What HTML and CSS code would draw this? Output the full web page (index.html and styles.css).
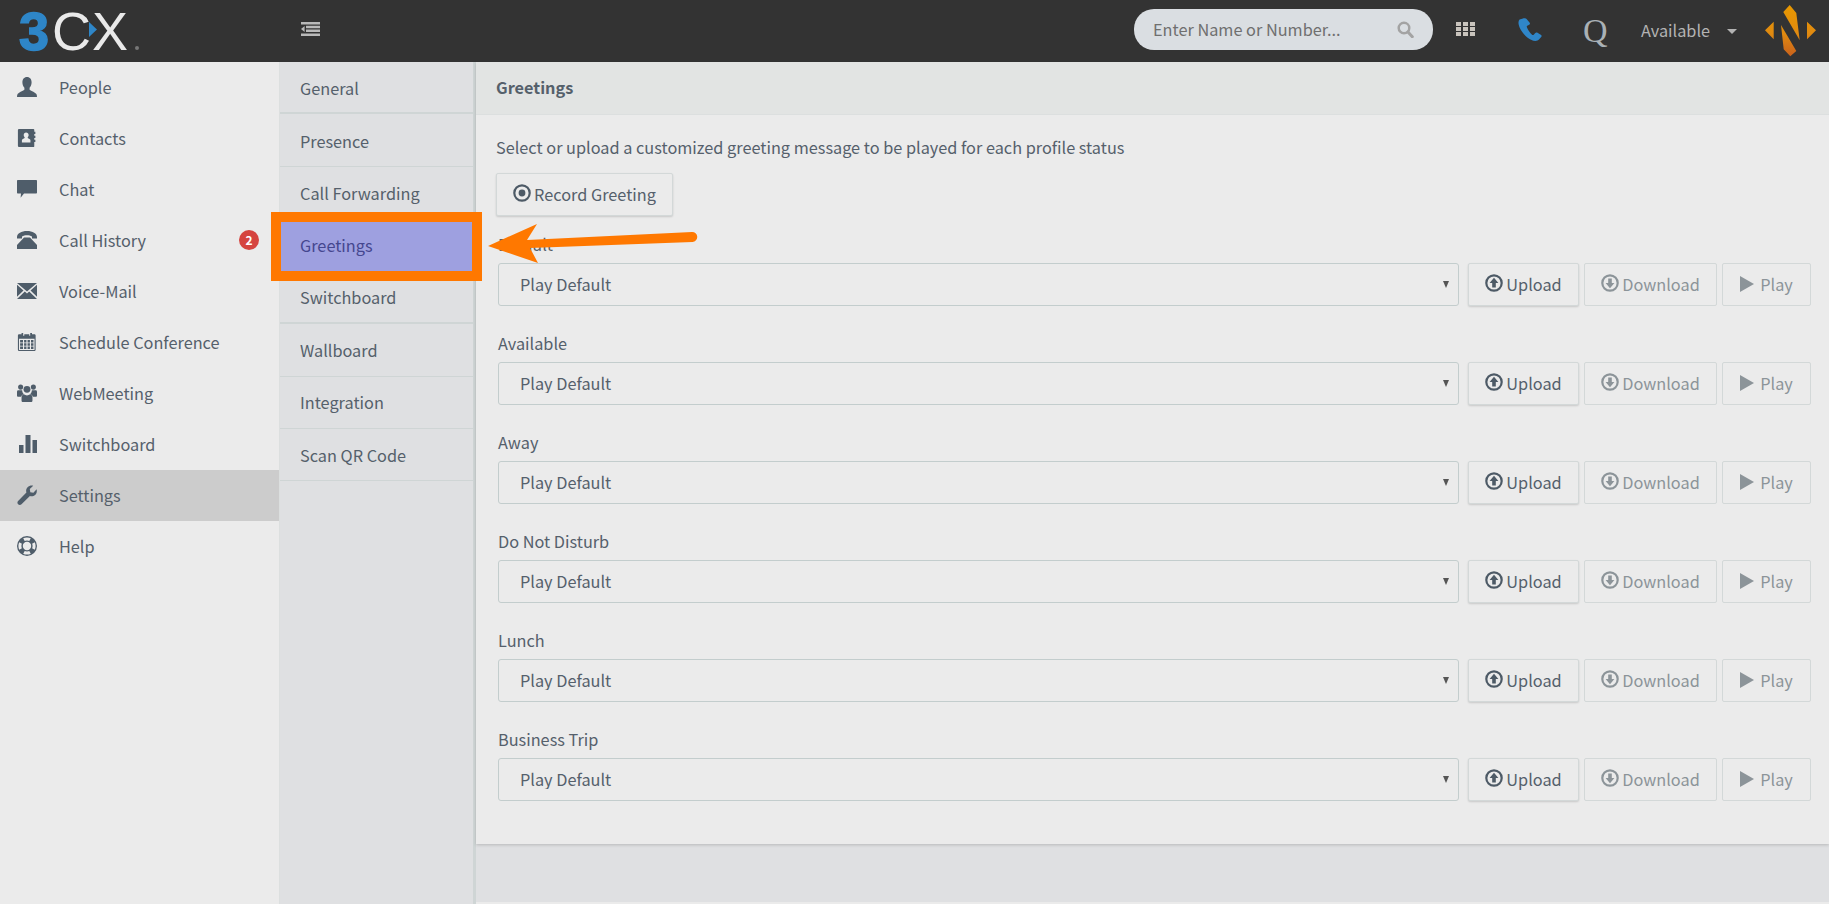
FILE: index.html
```html
<!DOCTYPE html>
<html lang="en">
  <head>
    <meta charset="UTF-8" />
    <meta name="viewport" content="width=device-width, initial-scale=1.0" />
    <title>Greetings</title>
    <link rel="stylesheet" href="styles.css">
  </head>
  <body>
    <header class="topbar">
      <svg class="logo" viewBox="0 0 301 62" width="301" height="62">
        <text y="49.500"><tspan class="logo-three" x="19">3</tspan><tspan class="logo-cx" x="52 92">CX</tspan></text>
        <path fill="#2e86c8" d="M89 22l8 7.500-8 7.500z"/>
        <circle cx="137" cy="48" r="2" fill="#777777"/>
      </svg>
      <svg class="collapse-icon" viewBox="0 0 19 14" width="19" height="14"><path fill="#b9b9b9" d="M0 0h19v2.500H0zM5 3.800h14v2.400H5zM5 7.600h14V10H5zM0 11.500h19V14H0zM3.600 4v6L0 7z"/></svg>
      <div class="search">
        <input type="text" placeholder="Enter Name or Number..." />
        <svg viewBox="0 0 18 18" width="17" height="17"><circle cx="7.400" cy="7.400" r="5.600" fill="none" stroke="#a3a3a3" stroke-width="2.600"/><path d="M11.600 11.600l4.600 5" stroke="#a3a3a3" stroke-width="3.200" stroke-linecap="round"/></svg>
      </div>
      <svg class="grid-icon" viewBox="0 0 19 14" width="19" height="14"><path fill="#c9c4bd" d="M0 0h5v4H0zM7 0h5v4H7zM14 0h5v4h-5zM0 5h5v4H0zM7 5h5v4H7zM14 5h5v4h-5zM0 10h5v4H0zM7 10h5v4H7zM14 10h5v4h-5z"/></svg>
      <svg class="phone-icon" viewBox="0 0 24 23" width="24" height="23"><path fill="#2f86c9" d="M5 .4L1.600 1.600C.2 3 0 5.500 1.600 9.400c2 4.600 6.600 10 11.400 12.400 3.200 1.600 6.400 1.600 8-.2l2.400-2.800c.4-.6.300-1.300-.3-1.700l-4-2.500c-.6-.4-1.300-.2-1.800.3l-1.600 1.900c-.4.400-.9.400-1.400.1-2.400-1.800-4.400-4.800-5.500-7.800-.2-.6 0-1 .4-1.300l2-1.100c.6-.3.900-1 .7-1.600L9 1.400C8.700.5 6 0 5 .4z"/></svg>
      <div class="avatar">Q</div>
      <div class="status">Available</div>
      <i class="status-caret"></i>
      <svg class="brand" viewBox="0 0 52 52" width="52" height="52">
        <defs>
          <linearGradient id="brandfill" gradientUnits="userSpaceOnUse" x1="0" y1="0" x2="0" y2="52">
            <stop offset="0" stop-color="#e89800" />
            <stop offset="0.55" stop-color="#e08a10" />
            <stop offset="1" stop-color="#c9601c" />
          </linearGradient>
        </defs>
        <path fill="url(#brandfill)" d="M0 25.300l8.700-8.600v17.600zM42 16.700l9 8.600-9 9zM18.300 7L24.700 0l6.600 8 3.400 27.300zM16 20l15.300 26-6 5.300-6.600-7z"/>
      </svg>
    </header>

    <div class="layout">
      <nav class="sidebar">
        <a class="side-item"><svg viewBox="0 0 20 20"><path d="M10 0c3 0 4.600 2.400 4.600 5.400 0 2.200-.9 4.200-2 5.400v1.600c0 1 4.800 2.200 6.800 4.600.4.600.6 1.600.6 3H0c0-1.400.2-2.400.6-3 2-2.400 6.800-3.600 6.800-4.600v-1.600c-1.100-1.200-2-3.200-2-5.400C5.400 2.400 7 0 10 0z"/></svg>People</a>
        <a class="side-item"><svg viewBox="-1 -1 22 22"><path fill-rule="evenodd" d="M1.500 0H17c.7 0 1 .4 1 1v2h1.200v2.500H18v2h1.200V10H18v2h1.200v2.500H18V19c0 .6-.4 1-1 1H1.500c-.8 0-1.500-.6-1.500-1.400V1.400C0 .6.700 0 1.500 0zM9 4c-1.600 0-2.600 1.200-2.600 2.800 0 1 .4 2 1 2.500v.8c-1 .6-3 1.200-3 2.500V15h9.400v-2.400c0-1.300-2-1.900-3-2.500v-.8c.6-.5 1-1.500 1-2.500C11.800 5.200 10.600 4 9 4z"/></svg>Contacts</a>
        <a class="side-item"><svg viewBox="0 0 20 20"><path d="M1 1h18c.6 0 1 .4 1 1v11.400c0 .6-.4 1-1 1H7L3.600 18.800l.4-4.400H1c-.6 0-1-.4-1-1V2c0-.6.4-1 1-1z"/></svg>Chat</a>
        <a class="side-item"><svg viewBox="0 0 20 20"><path d="M0 7C0 3.500 4.500 1 10 1s10 2.500 10 6v1.600h-5V6.400C13.500 5.600 12 5.200 10 5.200s-3.500.4-5 1.200v2.200H0zM7 7.400h6L20 15v4H0v-4z"/></svg>Call History<span class="badge">2</span></a>
        <a class="side-item"><svg viewBox="0 0 20 20"><path d="M0 2h20L10 10.500zM0 3.800l6.500 5.700L0 15.800zM20 3.800v12l-6.500-6.300zM7.800 10.600L10 12.500l2.200-1.900L20 18H0z"/></svg>Voice-Mail</a>
        <a class="side-item"><svg viewBox="-1 -1 22 22"><path fill-rule="evenodd" d="M4 0h1.800v3H7V1.500h5.500V3h1V0h2v1.500H18c.8 0 1.500.6 1.500 1.400v15.700c0 .8-.7 1.400-1.500 1.400H1.500C.7 20 0 19.400 0 18.600V2.900C0 2.100.7 1.500 1.500 1.500H4zM1.200 6.500v12.300h17.100V6.500zM2.400 7.700h3.200v2.900H2.400zM6.800 7.700h2.600v2.900H6.800zM10.600 7.700h2.600v2.900h-2.600zM14.400 7.700h2.700v2.900h-2.700zM2.400 11.300h3.200v2.900H2.400zM6.800 11.300h2.600v2.900H6.800zM10.600 11.300h2.600v2.900h-2.600zM14.400 11.300h2.700v2.900h-2.700zM2.400 14.900h3.200v2.700H2.400zM6.800 14.900h2.600v2.700H6.800zM10.600 14.900h2.600v2.700h-2.600zM14.400 14.900h2.700v2.700h-2.700z"/></svg>Schedule Conference</a>
        <a class="side-item"><svg viewBox="0 0 22 20"><circle cx="4" cy="3.500" r="2.800"/><circle cx="18" cy="3.500" r="2.800"/><circle cx="11" cy="6" r="3.800"/><path d="M1 7h4.600C6 9.400 6.500 10.500 7.500 11 6 11.800 4.800 13 4.500 14H1c-.6 0-1-.4-1-1V9c0-1 .4-2 1-2zM21 7h-4.600c-.4 2.400-.9 3.500-1.900 4 1.500.8 2.700 2 3 3H21c.6 0 1-.4 1-1V9c0-1-.4-2-1-2zM7.500 11.500c1 .8 2.200 1.200 3.500 1.200s2.500-.4 3.500-1.200c1.500.8 2.500 2 2.500 3.500v3.500c0 .8-.6 1.500-1.500 1.500h-9c-.9 0-1.500-.7-1.500-1.500V15c0-1.500 1-2.700 2.500-3.500z"/></svg>WebMeeting</a>
        <a class="side-item"><svg viewBox="0 0 20 20"><path d="M2 11h4.500v8H2zM8.500 1h5v18h-5zM15.500 6H20v13h-4.500z"/></svg>Switchboard</a>
        <a class="side-item is-current"><svg viewBox="0 0 20 20"><path d="M19.600 4.200c.6 2.200 0 4.400-1.500 5.800-1.400 1.300-3.400 1.700-5.200 1.100L4.500 19.300c-.9.900-2.400.9-3.400 0-.9-1-.9-2.500 0-3.400l8.300-8.400c-.6-1.800-.2-3.800 1.200-5.200C12 .8 14.100.2 16.200.7l-3.400 3.400.5 3.100 3.100.5z"/></svg>Settings</a>
        <a class="side-item"><svg viewBox="0 0 20 20"><path fill-rule="evenodd" d="M10 0a10 10 0 1 1 0 20 10 10 0 0 1 0-20zM10 1.400c-1.400 0-2.700.3-3.800.9l1.500 2.600c.7-.3 1.400-.5 2.300-.5s1.600.2 2.300.5l1.500-2.600c-1.100-.6-2.400-.9-3.800-.9zM2.300 6.200C1.700 7.300 1.400 8.600 1.400 10s.3 2.700.9 3.800l2.600-1.500c-.3-.7-.5-1.400-.5-2.300s.2-1.600.5-2.300zM17.700 6.200l-2.600 1.500c.3.700.5 1.400.5 2.300s-.2 1.600-.5 2.300l2.600 1.500c.6-1.100.9-2.400.9-3.800s-.3-2.700-.9-3.800zM10 5.800a4.200 4.200 0 1 0 0 8.400 4.200 4.200 0 0 0 0-8.400zM7.700 15.100l-1.500 2.600c1.100.6 2.400.9 3.800.9s2.700-.3 3.800-.9l-1.500-2.600c-.7.3-1.400.5-2.300.5s-1.600-.2-2.300-.5z"/></svg>Help</a>
      </nav>

      <nav class="submenu">
        <a class="sub-item">General</a>
        <a class="sub-item">Presence</a>
        <a class="sub-item">Call Forwarding</a>
        <a class="sub-item is-marked">Greetings</a>
        <a class="sub-item is-thick">Switchboard</a>
        <a class="sub-item">Wallboard</a>
        <a class="sub-item">Integration</a>
        <a class="sub-item">Scan QR Code</a>
      </nav>

      <main class="content">
        <section class="panel">
          <h1 class="panel-title">Greetings</h1>
          <div class="panel-body">
            <p class="intro">Select or upload a customized greeting message to be played for each profile status</p>
            <button class="btn btn-record">
              <svg class="btn-icon" viewBox="0 0 18 18"><circle cx="9" cy="9" r="7.700" fill="none" stroke="#4d5a66" stroke-width="2.200"/><circle cx="9" cy="9" r="3.400" fill="#4d5a66"/></svg>Record Greeting
            </button>

            <div class="greeting">
              <label>Default</label>
              <div class="greeting-row">
                <div class="select-wrap"><select><option>Play Default</option></select></div>
                <button class="btn btn-upload"><svg class="btn-icon" viewBox="0 0 18 18"><use href="#up-icon"/></svg>Upload</button>
                <button class="btn btn-download" disabled><svg class="btn-icon" viewBox="0 0 18 18"><use href="#down-icon"/></svg>Download</button>
                <button class="btn btn-play" disabled><svg class="btn-icon" viewBox="0 0 14 16"><path d="M0 0l14 8-14 8z"/></svg>Play</button>
              </div>
            </div>
            <div class="greeting">
              <label>Available</label>
              <div class="greeting-row">
                <div class="select-wrap"><select><option>Play Default</option></select></div>
                <button class="btn btn-upload"><svg class="btn-icon" viewBox="0 0 18 18"><use href="#up-icon"/></svg>Upload</button>
                <button class="btn btn-download" disabled><svg class="btn-icon" viewBox="0 0 18 18"><use href="#down-icon"/></svg>Download</button>
                <button class="btn btn-play" disabled><svg class="btn-icon" viewBox="0 0 14 16"><path d="M0 0l14 8-14 8z"/></svg>Play</button>
              </div>
            </div>
            <div class="greeting">
              <label>Away</label>
              <div class="greeting-row">
                <div class="select-wrap"><select><option>Play Default</option></select></div>
                <button class="btn btn-upload"><svg class="btn-icon" viewBox="0 0 18 18"><use href="#up-icon"/></svg>Upload</button>
                <button class="btn btn-download" disabled><svg class="btn-icon" viewBox="0 0 18 18"><use href="#down-icon"/></svg>Download</button>
                <button class="btn btn-play" disabled><svg class="btn-icon" viewBox="0 0 14 16"><path d="M0 0l14 8-14 8z"/></svg>Play</button>
              </div>
            </div>
            <div class="greeting">
              <label>Do Not Disturb</label>
              <div class="greeting-row">
                <div class="select-wrap"><select><option>Play Default</option></select></div>
                <button class="btn btn-upload"><svg class="btn-icon" viewBox="0 0 18 18"><use href="#up-icon"/></svg>Upload</button>
                <button class="btn btn-download" disabled><svg class="btn-icon" viewBox="0 0 18 18"><use href="#down-icon"/></svg>Download</button>
                <button class="btn btn-play" disabled><svg class="btn-icon" viewBox="0 0 14 16"><path d="M0 0l14 8-14 8z"/></svg>Play</button>
              </div>
            </div>
            <div class="greeting">
              <label>Lunch</label>
              <div class="greeting-row">
                <div class="select-wrap"><select><option>Play Default</option></select></div>
                <button class="btn btn-upload"><svg class="btn-icon" viewBox="0 0 18 18"><use href="#up-icon"/></svg>Upload</button>
                <button class="btn btn-download" disabled><svg class="btn-icon" viewBox="0 0 18 18"><use href="#down-icon"/></svg>Download</button>
                <button class="btn btn-play" disabled><svg class="btn-icon" viewBox="0 0 14 16"><path d="M0 0l14 8-14 8z"/></svg>Play</button>
              </div>
            </div>
            <div class="greeting">
              <label>Business Trip</label>
              <div class="greeting-row">
                <div class="select-wrap"><select><option>Play Default</option></select></div>
                <button class="btn btn-upload"><svg class="btn-icon" viewBox="0 0 18 18"><use href="#up-icon"/></svg>Upload</button>
                <button class="btn btn-download" disabled><svg class="btn-icon" viewBox="0 0 18 18"><use href="#down-icon"/></svg>Download</button>
                <button class="btn btn-play" disabled><svg class="btn-icon" viewBox="0 0 14 16"><path d="M0 0l14 8-14 8z"/></svg>Play</button>
              </div>
            </div>
          </div>
        </section>
      </main>
    </div>

    <!-- annotation drawn over the screenshot -->
    <svg class="arrow" viewBox="0 0 220 50" width="220" height="50">
      <path fill="#ff7800" d="M0 22L49 0 39 16 204 8a5 5 0 0 1 .5 10L42 24 50 39z"/>
    </svg>

    <svg class="defs" width="0" height="0">
      <symbol id="up-icon" viewBox="0 0 18 18"><circle cx="9" cy="9" r="7.700" fill="none" stroke="currentColor" stroke-width="2.200"/><path fill="currentColor" d="M9 3.800L13.400 9H10.800v4.600H7.200V9H4.600z"/></symbol>
      <symbol id="down-icon" viewBox="0 0 18 18"><circle cx="9" cy="9" r="7.700" fill="none" stroke="currentColor" stroke-width="2.200"/><path fill="currentColor" d="M9 14.200L4.600 9h2.600V4.400h3.600V9h2.600z"/></symbol>
    </svg>
  </body>
</html>
```

FILE: styles.css
```css
* {
  box-sizing: border-box;
}

html,
body {
  height: 100%;
}

body {
  margin: 0;
  height: 904px;
  overflow: hidden;
  position: relative;
  display: flex;
  flex-direction: column;
  background-color: #dfe0e2;
  color: #55606b;
  font-family: "Noto Sans CJK SC", "Noto Sans", sans-serif;
  font-size: 16.3px;
  line-height: 20px;
}

a {
  display: block;
  color: inherit;
}

/* top bar */

.topbar {
  flex: none;
  height: 62px;
  padding-bottom: 4px;
  display: flex;
  align-items: center;
  background-color: #333333;
}

.logo {
  flex: none;
  margin-bottom: -4px;
  font-family: "Liberation Sans", sans-serif;
  font-size: 54px;
}

.logo-three {
  fill: #2e86c8;
  stroke: #2e86c8;
  stroke-width: 1.500px;
  font-weight: 700;
}

.logo-cx {
  fill: #e9e9e9;
  font-weight: 400;
}

.collapse-icon {
  flex: none;
}

.search {
  display: flex;
  align-items: center;
  width: 299px;
  height: 41px;
  margin-left: 814px;
  padding: 0 19px;
  border-radius: 20px;
  background-color: #dadee2;
}

.search input {
  flex: 1;
  min-width: 0;
  border: 0;
  padding: 0;
  background: none;
  font: inherit;
  color: #6f6f6f;
}

.search input::placeholder {
  color: #6f6f6f;
  opacity: 1;
}

.grid-icon {
  flex: none;
  margin-left: 23px;
}

.phone-icon {
  flex: none;
  margin-left: 43px;
}

.avatar {
  margin-left: 41px;
  width: 24px;
  font-family: "Liberation Serif", serif;
  font-size: 34px;
  line-height: 40px;
  color: #aab1b6;
  padding-top: 3px;
}

.status {
  margin-left: 34px;
  padding-top: 1px;
  color: #b3b3b3;
}

.status-caret {
  margin-left: 17px;
  margin-top: 4px;
  border-top: 5px solid #b3b3b3;
  border-left: 5px solid transparent;
  border-right: 5px solid transparent;
}

.brand {
  flex: none;
  margin-left: 28px;
  margin-bottom: -3px;
}

/* columns */

.layout {
  flex: 1;
  min-height: 0;
  display: flex;
}

.sidebar {
  flex: none;
  width: 280px;
  background-color: #ebebeb;
  border-right: 1px solid #dcdfdf;
}

.side-item {
  display: flex;
  align-items: center;
  height: 51px;
  padding-left: 17px;
  padding-bottom: 1px;
}

.side-item svg {
  flex: none;
  width: 20px;
  height: 20px;
  margin-right: 22px;
  fill: #4f5d6a;
}

.side-item.is-current {
  background-color: #cccccc;
}

.badge {
  width: 20px;
  height: 20px;
  margin-left: auto;
  margin-right: 20px;
  border-radius: 50%;
  background-color: #d5443f;
  color: #ffffff;
  font-size: 12px;
  font-weight: 700;
  line-height: 20px;
  text-align: center;
}

.submenu {
  flex: none;
  width: 196px;
  background-color: #dfe0e2;
  border-right: 3px solid #cfd5d5;
}

.sub-item {
  display: flex;
  align-items: center;
  height: 52.430px;
  padding-left: 20px;
  border-bottom: 1px solid #cfd5d5;
}

.sub-item:first-child,
.sub-item:nth-child(2) {
  padding-top: 1px;
}

.sub-item:first-child,
.sub-item.is-thick {
  border-bottom-width: 2px;
}

.sub-item.is-marked {
  position: relative;
  z-index: 2;
  background-color: #9ea0e0;
  border-bottom: 0;
  color: #45478f;
}

/* orange frame of the annotation */
.sub-item.is-marked::after {
  content: "";
  position: absolute;
  left: -9px;
  right: -9px;
  top: -7.300px;
  bottom: -9px;
  border: 10px solid #ff7800;
  pointer-events: none;
}

.content {
  flex: 1;
  min-width: 0;
  border-bottom: 2px solid #ebebeb;
}

.panel {
  height: 782px;
  background-color: #ebebeb;
  box-shadow: 0 1px 3px rgba(0, 0, 0, 0.18);
}

.panel-title {
  margin: 0;
  height: 53px;
  padding: 15px 20px 0;
  background-color: #e2e4e3;
  border-bottom: 1px solid #dcdfdf;
  font-size: 16.3px;
  font-weight: 700;
  line-height: 20px;
}

.panel-body {
  padding: 22px 18px 0 20px;
}

.intro {
  margin: 0 0 16px;
}

.btn {
  display: inline-flex;
  align-items: center;
  justify-content: center;
  height: 43px;
  padding: 0 0 2px;
  border: 1px solid #d3d8d8;
  border-radius: 2px;
  background-color: #ebebeb;
  font: inherit;
  color: #55606b;
  box-shadow: 0 1px 2px rgba(0, 0, 0, 0.15);
}

.btn-icon {
  flex: none;
  width: 18px;
  height: 18px;
  margin-right: 3px;
  margin-top: -1px;
  color: #4d5a66;
}

.btn-record {
  width: 177px;
  display: flex;
}

.btn[disabled] {
  color: #8c9499;
  box-shadow: none;
}

.btn[disabled] .btn-icon {
  color: #8c9499;
  fill: #8c9499;
}

.btn-play .btn-icon {
  width: 14px;
  height: 16px;
  margin-top: 1px;
  margin-right: 6px;
}

.btn-upload {
  width: 111px;
  flex: none;
}

.btn-download {
  width: 133px;
  flex: none;
}

.btn-play {
  width: 89px;
  flex: none;
}

.greeting {
  padding-left: 2px;
}

.btn-record + .greeting {
  margin-top: 19px;
}

.greeting + .greeting {
  margin-top: 28px;
}

.greeting label {
  display: block;
  height: 28px;
  line-height: 18px;
}

.greeting-row {
  display: flex;
  gap: 5px;
}

.select-wrap {
  position: relative;
  flex: 1;
  margin-right: 4px;
}

.select-wrap::after {
  content: "";
  position: absolute;
  right: 10px;
  top: 18px;
  border-top: 7px solid #555555;
  border-left: 3.500px solid transparent;
  border-right: 3.500px solid transparent;
}

.select-wrap select {
  width: 100%;
  height: 43px;
  padding: 0 21px 1px;
  border: 1px solid #c3cdcd;
  border-radius: 3px;
  background: none;
  appearance: none;
  font: inherit;
  color: #55606b;
}

/* annotation arrow */

.arrow {
  position: absolute;
  left: 488px;
  top: 224px;
  z-index: 3;
}

.defs {
  position: absolute;
}
```
